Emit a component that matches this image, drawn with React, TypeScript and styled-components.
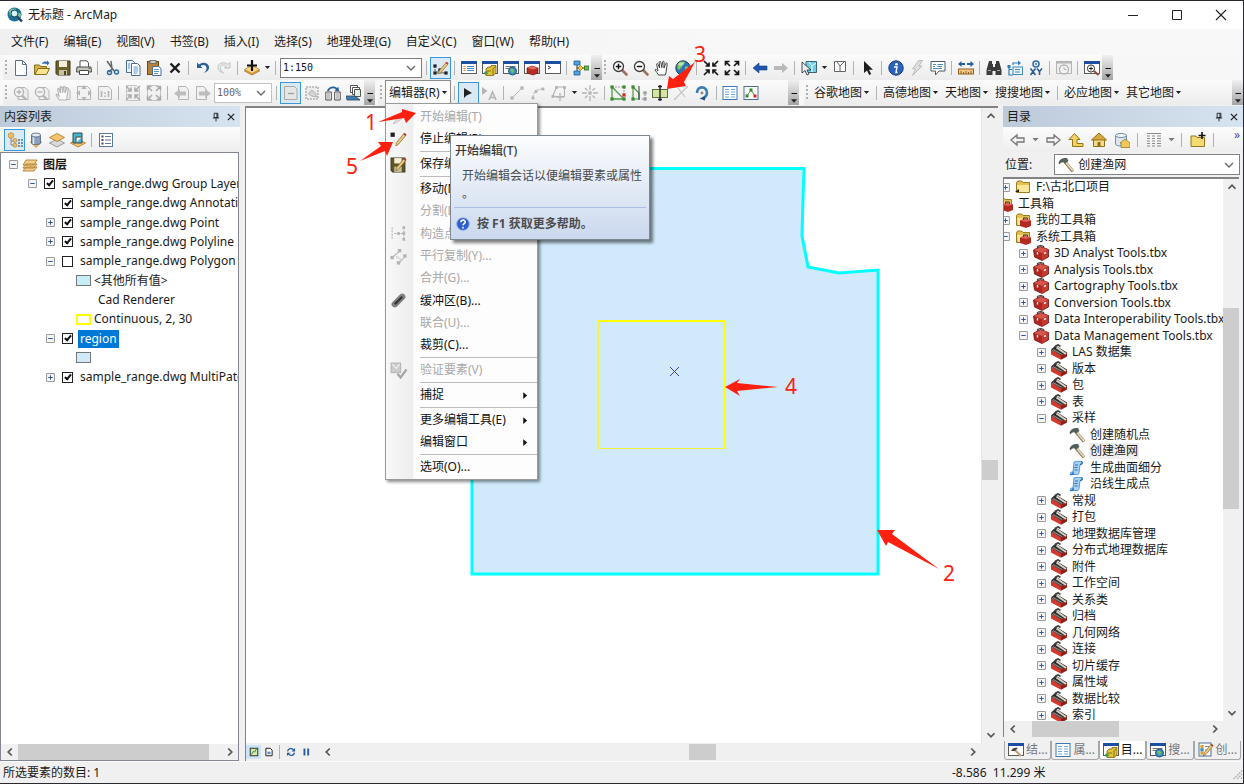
import React, { ReactNode, useState } from 'react';
import styled, { createGlobalStyle, css } from 'styled-components';

const GlobalStyle = createGlobalStyle`
  *, *::before, *::after { box-sizing: border-box; }
  html, body { margin: 0; padding: 0; }
  body, button, input, select {
    font-family: 'Noto Sans', 'Noto Sans CJK SC', sans-serif;
    font-size: 12px;
    line-height: 16px;
    color: #1a1a1a;
  }
  button { margin: 0; padding: 0; border: 0; background: none; }
  ul, h2 { margin: 0; padding: 0; list-style: none; font: inherit; }
`;

/* ---------- Icons ---------- */

const G = '#b4b4b4';
const magnifier = (c: string, handle: string, sign: ReactNode) => (
  <>
    <path d="M10 10 L14.5 14.5" stroke={handle} strokeWidth="2.6" strokeLinecap="round" />
    <circle cx="6.5" cy="6.5" r="5" fill="#fff" stroke={c} strokeWidth="1.3" />
    {sign}
  </>
);
const pageMagnifier = (sign: ReactNode) => (
  <>
    <path d="M5 2.5h7l3 3v9H5z" fill="#eee" stroke={G} />
    <circle cx="6" cy="7" r="4.6" fill="#f4f4f4" stroke={G} strokeWidth="1.4" />
    <path d="M9 10.5l4 4" stroke={G} strokeWidth="2.4" />
    {sign}
  </>
);
const windowFrame = (
  <>
    <rect x="0.5" y="1.5" width="15" height="12" fill="#fff" stroke="#5b5b5b" />
    <path d="M0 1h16v3H0z" fill="#1d4fa0" />
  </>
);
const handPath =
  'M4.5 15c-1-2-2.5-3.5-3.5-5 .2-1 1.4-.8 2.2.4L4 11 2.6 4.3c.2-1 1.2-1 1.5 0L5.6 8 5.2 2.2c.2-1 1.4-1 1.6 0L7.8 7.600 8.600 1.900c.3-1 1.500-.8 1.500.2L9.900 8l1.900-4.600c.5-.8 1.600-.4 1.400.6L12.200 11c0 1.500-.5 2.500-1 4z';
const inArrows = (c: string, w = 1.5) => (
  <g stroke={c} strokeWidth={w} fill="none">
    <path d="M1 1l4.500 4.500M6 2.500V6H2.500M15 1l-4.500 4.500M10 2.500V6h3.500M1 15l4.500-4.500M6 13.500V10H2.500M15 15l-4.500-4.500M10 13.500V10h3.500" />
  </g>
);
const outArrows = (c: string, w = 1.5) => (
  <g stroke={c} strokeWidth={w} fill="none">
    <path d="M2 2l4 4M1.500 5.500v-4h4M14 2l-4 4M14.500 5.500v-4h-4M2 14l4-4M1.500 10.500v4h4M14 14l-4-4M14.500 10.500v4h-4" />
  </g>
);
const arrowShape = 'M1 8l6-5v3h8v4H7v3z';
const toolbox = (
  <>
    <path d="M0.500 5l7-3.500 8 3v7.500L9 15.500 1.500 12z" fill="#b3261e" stroke="#6f1511" strokeWidth=".8" />
    <path d="M1 5l6.500-3 7.500 2.500L9 8z" fill="#d9564c" />
    <path d="M9 8l6-3.200v7L9 15z" fill="#c33a31" />
    <path d="M4.500 3.500V1.500l3-1 3 1V3" fill="none" stroke="#444" strokeWidth="1.300" />
    <path d="M4.500 7v2.500M11 8.500l2-1" stroke="#eee" strokeWidth="1.400" />
  </>
);
const folder = (
  <>
    <path d="M1.500 4V13.500h13V3.500H8L6.800 2H2.500z" fill="#e4c04e" stroke="#9c7c20" />
    <path d="M2 6h12v7H3z" fill="#fbe79a" />
  </>
);
const smallBox = (
  <>
    <path d="M5 8.500l5-2 6 2v5.500l-5 2-6-2z" fill="#b22a22" />
    <path d="M5 8.500l5-2 6 2-5 1.500z" fill="#df6258" />
    <path d="M8.500 7.500V6h4v1.500" fill="none" stroke="#333" />
  </>
);
const hammer = (
  <>
    <path d="M7 5l8 9.500" stroke="#8e7b57" strokeWidth="3.200" />
    <path d="M7.500 5l7.500 9" stroke="#e6dab8" strokeWidth="1.700" />
    <path d="M.500 6c1-4 4-5.500 8.500-5L10.500 4 7 6.500C5 4.500 3 5 1.500 7.500z" fill="#53605b" />
  </>
);
const stackDiamond = (y: number, c: string, s: string) => (
  <path d={`M0.500 ${y + 4}L8 ${y}l7.500 4L8 ${y + 8}z`} fill={c} stroke={s} strokeWidth=".8" />
);
const pencil = (
  <>
    <path d="M6 11L13 2.500l2 1.500L8 12.500 5.500 14z" fill="#e9c77d" stroke="#8a6b33" strokeWidth=".7" />
    <path d="M12.500 3l2 1.600 1-1.300L13.600 1.700z" fill="#b03a30" />
  </>
);
const dots = (pts: number[][], c: string, r = 1.6) =>
  pts.map(([x, y]) => <rect key={`${x}-${y}`} x={x - r} y={y - r} width={r * 2} height={r * 2} fill={c} />);

const ICONS: Record<string, ReactNode> = {
  app: (
    <>
      <circle cx="7.500" cy="7.500" r="7" fill="#1c6f95" />
      <path d="M2 4c2-3 6-3 7-2 0 2-2 2-2 4s-3 1-4 3zM9 6c2-1 4 0 5 1 0 3-2 5-4 5z" fill="#7cc6a0" />
      <circle cx="7.500" cy="6.500" r="3.500" fill="#d5f2fb" stroke="#0d3b58" />
      <path d="M10 9.500l5 5" stroke="#1b3f5c" strokeWidth="2.400" />
    </>
  ),
  new: <path d="M2.500 .5h7l4 4v11h-11z M9.500 .5v4h4" fill="#fff" stroke="#5f6f86" />,
  open: (
    <>
      <path d="M.5 14.500V5h5l1 1.500h6V9" fill="#d7b445" stroke="#8b6c16" />
      <path d="M1 14.500L4 8.500h11.500l-3 6z" fill="#fbe48f" stroke="#8b6c16" />
      <path d="M8 4c1-2.500 3-3 5-2V.5L15.500 3 13 5.500V4C11 3 9.500 3.500 8 4z" fill="#2d6db5" />
    </>
  ),
  save: (
    <>
      <path d="M1 1h14v14H2.500L1 13.500z" fill="#6b612c" stroke="#3f3a1a" />
      <rect x="4" y="1" width="8" height="6" fill="#f3efd8" />
      <rect x="4" y="10" width="8" height="5" fill="#c6c0a3" />
      <rect x="9" y="11" width="2" height="4" fill="#4a431f" />
    </>
  ),
  print: (
    <>
      <path d="M4 7V.800h7L12.500 3v4" fill="#fff" stroke="#555" />
      <path d="M1 7h14l.5 5h-15z" fill="#c7c7bd" stroke="#4a4a4a" />
      <path d="M3.500 10.500h9v4h-9z" fill="#fff" stroke="#4a4a4a" />
      <path d="M12.500 8.500h1.500" stroke="#4a7a33" />
    </>
  ),
  cut: (
    <g fill="none">
      <path d="M3 1l7 10M7 1l1 8-3 3" stroke="#666" strokeWidth="1.500" />
      <circle cx="5.500" cy="12.500" r="2" stroke="#2d6d9f" strokeWidth="1.500" />
      <circle cx="12.500" cy="12" r="2" stroke="#2d6d9f" strokeWidth="1.500" />
    </g>
  ),
  copy: (
    <>
      <path d="M1.500 .500h6l2 2v10h-8z" fill="#eaf2fb" stroke="#4d6c8e" />
      <path d="M6.500 3.500h6l2.500 2.500v9.500H6.500z" fill="#fff" stroke="#4d6c8e" />
      <path d="M8.500 7h4M8.500 9h4.500M8.500 11h4.500M8.500 13h4M3 4h2M3 6h2M3 8h2" stroke="#5a94cf" />
    </>
  ),
  paste: (
    <>
      <rect x="1.500" y="1.500" width="11" height="13" fill="#b7813a" stroke="#6d4716" />
      <rect x="4" y=".500" width="6" height="3" fill="#ccc" stroke="#555" strokeWidth=".7" />
      <path d="M6.500 6.500h6l2.500 2v7H6.500z" fill="#fff" stroke="#4d6c8e" />
      <path d="M8 9.500h5M8 11.500h5M8 13.500h4" stroke="#5a94cf" />
    </>
  ),
  delete: <path d="M3.500 3.500l9 9M12.500 3.500l-9 9" stroke="#1c1c1c" strokeWidth="2.400" />,
  undo: <path d="M2 2.500v5.500h5.500L5.500 6C8 4 12 5 11.500 8.500 11.300 10.500 10 12 8.500 13c4-1 6-3.500 5.500-6.500C13 2.500 7.500 1.500 4 4.500z" fill="#2b6195" />,
  redo: <path d="M14 2.500v5.500H8.500L10.500 6C8 4 4 5 4.500 8.500 4.700 10.500 6 12 7.500 13 3.500 12 1.500 9.500 2 6.500 3 2.500 8.500 1.500 12 4.500z" fill="#ececec" stroke="#b9b9b9" strokeWidth=".9" />,
  addData: (
    <>
      {stackDiamond(7, '#e9a93f', '#a67120')}
      {stackDiamond(5.5, '#fbd68a', '#b98430')}
      <path d="M8 0v11M3 5.500h10" stroke="#111" strokeWidth="2.200" />
    </>
  ),
  editorToolbar: (
    <>
      <path d="M2 6v7h11M2 13l5-3 3 3" fill="none" stroke="#555" strokeDasharray="2 1" />
      {dots([[2, 6], [2, 13], [7, 10], [13, 13]], '#222')}
      {pencil}
    </>
  ),
  toc: (
    <>
      {windowFrame}
      <path d="M2.500 6.500h2M2.500 8.500h2M2.500 10.500h2" stroke="#d5822b" strokeWidth="1.200" />
      <path d="M6 6.500h7M6 8.500h7M6 10.500h7" stroke="#3f87c8" strokeWidth="1.200" />
    </>
  ),
  catalog: (
    <>
      {windowFrame}
      <path d="M4 9l2-2h3V5.500h5V13l-3 2.500H4z" fill="#e2c23a" stroke="#7b6512" strokeWidth=".8" />
      <path d="M11 8.500v7M11 8.500l3-2M5 11h4" stroke="#8c7110" />
      <path d="M2 12l3-1 1 3-3 1z" fill="#4a9a4a" />
    </>
  ),
  search: (
    <>
      {windowFrame}
      <path d="M2.500 6.500h10M2.500 8.500h4" stroke="#777" />
      <circle cx="9.500" cy="11" r="4" fill="#3c8fc9" stroke="#1d5680" />
      <path d="M7 10c1-2 3-1 4 0s-1 3-2 3z" fill="#74bf62" />
    </>
  ),
  toolboxWindow: (
    <>
      {windowFrame}
      <path d="M3 8l5-2 6 2v5l-5 2-6-2z" fill="#b52d24" stroke="#6f1511" strokeWidth=".7" />
      <path d="M3 8l5-2 6 2-5 1.500z" fill="#e06a60" />
    </>
  ),
  python: (
    <>
      {windowFrame}
      <path d="M3 6l2.500 1.500L3 9" fill="none" stroke="#222" />
    </>
  ),
  model: (
    <>
      <path d="M4 3v10M4 8h9" stroke="#333" fill="none" />
      <path d="M1 1h6v4H1zM1 11h6v4H1z" fill="#4ba3df" stroke="#1d5d92" strokeWidth=".8" />
      <path d="M7.500 5.500L10 8l-2.500 2.500L5 8z" fill="#f3c843" stroke="#8c6d16" strokeWidth=".8" />
      <rect x="11.500" y="6" width="4.500" height="4" fill="#6ab85a" stroke="#2d6d23" strokeWidth=".8" />
    </>
  ),
  zoomIn: magnifier('#3c3c3c', '#a0705c', <path d="M6.500 3.800v5.400M3.800 6.500h5.400" stroke="#111" strokeWidth="1.500" />),
  zoomOut: magnifier('#3c3c3c', '#a0705c', <path d="M3.800 6.500h5.400" stroke="#111" strokeWidth="1.500" />),
  pan: <path d={handPath} fill="#fff" stroke="#333" strokeWidth=".9" />,
  globe: (
    <>
      <circle cx="8" cy="8" r="7.200" fill="#2a77b8" stroke="#174466" />
      <path d="M3 4c2-3 6-3 7-2 0 2-3 2-3 4s-2 2-3 4C2 9 2 6 3 4zM10 7c2-1 4 0 4 1 0 3-2 5-4 5z" fill="#8fc65f" />
      <ellipse cx="6" cy="4" rx="3" ry="1.800" fill="#fff" opacity=".45" />
    </>
  ),
  fixedIn: inArrows('#161616', 1.7),
  fixedOut: outArrows('#161616', 1.7),
  back: <path d={arrowShape} fill="#1f57b0" stroke="#16407f" strokeWidth=".6" />,
  forward: <path d={arrowShape} transform="matrix(-1 0 0 1 16 0)" fill="#b9b9b9" />,
  select: (
    <>
      <path d="M5 1.500h10.500v11H5z" fill="#6cd0e6" stroke="#41626b" />
      <path d="M8 2l3 4 4-3M11 6v6" stroke="#fff" fill="none" />
      <path d="M1 2v11l3-2.500L6 15l2-1-2-4h4z" fill="#e8eef2" stroke="#222" strokeWidth=".8" />
    </>
  ),
  clear: <path d="M2.500 1.500h11v10h-11zM5 2l3 4 4-4M8 6v5" fill="#fff" stroke="#666" />,
  pointer: <path d="M4 1v12l3-2.500L9.200 15l2-1-2.200-4.200h4z" fill="#1e1e1e" />,
  info: (
    <>
      <circle cx="8" cy="8" r="7.200" fill="#2b62bb" stroke="#173a80" />
      <circle cx="8.500" cy="4.200" r="1.300" fill="#fff" />
      <path d="M6 7h3l-1 5.500h1.500" stroke="#fff" strokeWidth="1.400" fill="none" />
    </>
  ),
  lightning: <path d="M9.500 .5h4L10 6h3L3.500 15.500 6.500 9h-3z" fill="#dedede" stroke="#b0b0b0" strokeWidth=".8" />,
  html: (
    <>
      <path d="M1 1.500h14v9.500H9L5.500 15v-4H1z" fill="#fff" stroke="#4b5a68" />
      <path d="M3 4.500h3M7.500 4.500H13M3 6.500h2M7.500 6.500H12M3 8.500h9" stroke="#4c8ac0" />
    </>
  ),
  measure: (
    <>
      <rect x=".5" y="9" width="15" height="5" fill="#f5c987" stroke="#966120" />
      <path d="M3 14v-3M5.500 14v-2M8 14v-3M10.500 14v-2M13 14v-3" stroke="#7a4d15" strokeWidth=".8" />
      <path d="M0 4l3.500-3v2H7v2H3.500v2zM16 4l-3.500-3v2H9v2h3.500v2z" fill="#25609f" />
    </>
  ),
  find: (
    <>
      <path d="M3 1h3v3h1v3h2V4h1V1h3l2.500 9v5H9.500v-4h-3v4H.5v-5z" fill="#3b3b3b" />
      <path d="M2 10.500h3M11 10.500h3" stroke="#aaa" />
    </>
  ),
  route: (
    <>
      <path d="M2 6v9h4M2 9.500h3M6 5V3h7" stroke="#2c7fb5" fill="none" strokeWidth="1.200" />
      <path d="M11 .5l3 2.500-3 2.500z" fill="#2c7fb5" />
      <rect x="6" y="7" width="9.500" height="7.500" fill="#eaf4fb" stroke="#3d8abb" />
      <path d="M8 9.500h5M8 12h5" stroke="#3d8abb" />
      <rect x=".5" y="5" width="3" height="3" fill="#2c7fb5" />
    </>
  ),
  xy: (
    <>
      <circle cx="8" cy="4" r="3" fill="none" stroke="#2a6aa5" strokeWidth="1.500" />
      <circle cx="8" cy="4" r="1" fill="#2a6aa5" />
      <path d="M2.500 8.500l5 6.500M7.500 8.500l-5 6.500M9 8.500l2.500 3 2.500-3M11.500 11.500V15" stroke="#2a5f95" strokeWidth="1.600" fill="none" />
    </>
  ),
  time: (
    <>
      <path d="M.5 1.500h15v12H.5z" fill="#eee" stroke={G} />
      <path d="M0 1h16v2.500H0z" fill={G} />
      <circle cx="8" cy="9.500" r="4.500" fill="#f3f3f3" stroke={G} strokeWidth="1.300" />
      <path d="M8 7v2.500h2.500" stroke={G} fill="none" />
    </>
  ),
  viewer: (
    <>
      {windowFrame}
      <circle cx="7" cy="8.500" r="3.600" fill="#fff" stroke="#333" />
      <path d="M7 6.500v4M5 8.500h4" stroke="#222" />
      <path d="M10 11l4.500 4" stroke="#8e4a35" strokeWidth="2" />
    </>
  ),
  gZoomIn: pageMagnifier(<path d="M6 4.500v5M3.500 7h5" stroke={G} strokeWidth="1.400" />),
  gZoomOut: pageMagnifier(<path d="M3.500 7h5" stroke={G} strokeWidth="1.400" />),
  gPan: (
    <>
      <path d="M5 2.500h7l3 3v9H5z" fill="#eee" stroke={G} />
      <path d={handPath} fill="#f8f8f8" stroke={G} strokeWidth="1.100" />
    </>
  ),
  gFull: (
    <>
      <path d="M1.500 1.500h10l3 3v10h-13z" fill="#f1f1f1" stroke={G} />
      <path d="M8 0l2.500 4h-5zM8 16l2.500-4h-5zM0 8l4-2.500v5zM16 8l-4-2.500v5z" fill={G} />
    </>
  ),
  gOneToOne: (
    <>
      <path d="M1.500 1.500h10l3 3v10h-13z" fill="#f1f1f1" stroke={G} />
      <path d="M4.500 6v6M11.500 6v6M8 7.500V9M8 10.500V12" stroke={G} strokeWidth="1.600" />
    </>
  ),
  gIn: (
    <>
      <path d="M1.500 .5h10l3 3v12h-13z" fill="#f1f1f1" stroke="#c4c4c4" />
      {inArrows('#aaa')}
    </>
  ),
  gOut: (
    <>
      <path d="M1.500 .5h10l3 3v12h-13z" fill="#f1f1f1" stroke="#c4c4c4" />
      {outArrows('#aaa')}
    </>
  ),
  gBack: (
    <>
      <path d="M4.500 1.500h7l3 3v10h-10z" fill="#f1f1f1" stroke={G} />
      <path d="M0 8.500l6-4.500v2.500h6v4H6V13z" fill="#bdbdbd" />
    </>
  ),
  gForward: (
    <>
      <path d="M1.500 1.500h7l3 3v10h-10z" fill="#f1f1f1" stroke={G} />
      <path d="M16 8.500l-6-4.500v2.500H4v4h6V13z" fill="#bdbdbd" />
    </>
  ),
  gDraft: (
    <>
      <path d="M1.500 1.500h10l2.500 2.500v10.500H1.500z" fill="#e6e6e6" stroke="#a9a9a9" />
      <path d="M5 8.500h6" stroke="#a0a0a0" strokeWidth="1.400" />
    </>
  ),
  gFocus: (
    <>
      <path d="M2 2h12v12H2z" fill="#ededed" stroke={G} strokeDasharray="2 1" strokeWidth="1.600" />
      <path d="M4.500 9l3-4 4 3 1 4-5-1z" fill="#d4d4d4" stroke={G} />
    </>
  ),
  changeLayout: (
    <>
      <path d="M.800 7h5.500v8H.800zM9.700 7h5.500v8H9.700z" fill="#fff" stroke="#4a4a4a" />
      <path d="M2 9h3M2 11h3M2 13h3M11 9h3M11 11h3M11 13h3" stroke="#888" />
      <path d="M2 6C3 1.500 9 0 12 3l1.500-1L14 6.500 9.500 5.500 11 4.200C8.500 2.500 4.500 3 4 6z" fill="#25609f" />
    </>
  ),
  dataDriven: (
    <>
      <path d="M4.500 .500h7v7h-7z" fill="#fff" stroke="#555" />
      <path d="M6.500 2.500h7v7h-7z" fill="#fff" stroke="#555" />
      <path d="M8.500 4.500h6v7h-6z" fill="#e3f0e0" stroke="#555" />
      <path d="M0 11h9l5 4H1z" fill="#3b81b8" stroke="#345" strokeWidth=".8" />
    </>
  ),
  editArrow: <path d="M4 3v10l2.500-2.500L12 8z" fill="#222" />,
  editAnno: (
    <>
      <path d="M1 2v8l5.500-4z" fill={G} />
      <path d="M8 15l3.500-8L15 15M9.500 12.500h4" stroke={G} strokeWidth="1.600" fill="none" />
    </>
  ),
  straight: (
    <>
      <path d="M3 13L13 3" stroke={G} />
      {dots([[3, 13], [13, 3]], G)}
    </>
  ),
  arc: (
    <>
      <path d="M3 13C3 7 7 4 13 4" stroke={G} fill="none" strokeDasharray="3 1" />
      {dots([[3, 13], [6, 6.5], [13, 4]], G, 1.4)}
    </>
  ),
  trace: (
    <>
      <path d="M1.500 11.500L5.500 2h8v9.500z" stroke={G} fill="none" strokeWidth="1.200" />
      {dots([[2, 11.5], [5.5, 2.5], [13.5, 2.5]], G, 1.4)}
      <path d="M9 8v8M5 12h8" stroke={G} strokeWidth="1.300" />
    </>
  ),
  burst: <path d="M8 0v5M8 11v5M0 8h5M11 8h5M3 3l2.500 2.500M13 3l-2.500 2.500M3 13l2.500-2.500M13 13l-2.500-2.500M7 7h2v2H7z" stroke={G} strokeWidth="1.300" fill="none" />,
  editVertices: (
    <>
      <path d="M2 2v12h12L2 2" stroke="#4e9a44" fill="none" strokeWidth="1.300" />
      <path d="M2 2h12v8" stroke="#999" fill="none" strokeDasharray="2 1" />
      {dots([[2, 2], [2, 14], [14, 14], [14, 2]], '#3a8a30')}
      {dots([[14, 10]], '#d22')}
    </>
  ),
  reshape: (
    <>
      <path d="M2 2v12M2 2l6 6v6H2" stroke="#4e9a44" fill="none" strokeWidth="1.200" />
      <path d="M8 1v14" stroke="#333" />
      <path d="M14 8v6h-4" stroke="#888" fill="none" strokeDasharray="1 1" />
      {dots([[2, 2], [2, 14]], '#3a8a30')}
      {dots([[14, 8], [14, 14]], '#999')}
    </>
  ),
  cutPolygon: (
    <>
      <rect x=".5" y="4.500" width="15" height="8" fill="#d5e3a3" stroke="#5d6d3c" />
      <path d="M8 0v16M6 1.500h4M6 14.500h4" stroke="#222" strokeWidth="1.400" />
    </>
  ),
  split: (
    <>
      <path d="M2 14L14 2M5 3l7 9" stroke="#c4c4c4" strokeWidth="1.200" />
      {dots([[2, 14], [14, 2]], '#ccc', 1)}
    </>
  ),
  rotate: (
    <>
      <path d="M3 8c0-8 10-7 10 0 0 3-2 4.500-4 6" fill="none" stroke="#3a7db8" strokeWidth="2.600" />
      <path d="M5.500 13.500L11 11v4.500z" fill="#1d5288" />
      <circle cx="8" cy="8" r="1.400" fill="#888" />
    </>
  ),
  attributes: (
    <>
      <rect x="1" y="1.500" width="14" height="13" fill="#fff" stroke="#3f78b5" />
      <path d="M3 4.500h4M3 7h4M3 9.500h4M3 12h4M9 4.500h4M9 7h4M9 9.500h4M9 12h4" stroke="#6fa8dd" />
    </>
  ),
  sketchProps: (
    <>
      <rect x="1" y="1.500" width="14" height="13" fill="#fff" stroke="#4c6f93" />
      <path d="M4 11l4-6 4 6" stroke="#4e9a44" fill="none" />
      {dots([[4, 11], [8, 5]], '#2f8a2a', 1.5)}
      {dots([[12, 11]], '#d22', 1.5)}
    </>
  ),
  listOrder: (
    <>
      <path d="M4 6v7h3M4 9h3" stroke="#888" fill="none" />
      <circle cx="4" cy="3.500" r="2.800" fill="#f0c164" stroke="#a87624" strokeWidth=".6" />
      <circle cx="8" cy="8.500" r="2" fill="#f0c164" stroke="#a87624" strokeWidth=".6" />
      <circle cx="8" cy="13.200" r="2" fill="#f0c164" stroke="#a87624" strokeWidth=".6" />
      <path d="M11 8h2M14 8h2M11 11h2M14 11h2M11 14h2M14 14h2" stroke="#3f78b5" strokeWidth="1.400" />
    </>
  ),
  listSource: (
    <>
      <path d="M2.500 10l5.500 5.500 5.500-5.500z" fill="#f3b94f" stroke="#a87624" strokeWidth=".6" />
      <path d="M3.500 3v8c0 2 9 2 9 0V3z" fill="#8ba0bd" stroke="#4d6079" strokeWidth=".8" />
      <path d="M5.500 4.500v7.500" stroke="#dfe7f0" strokeWidth="1.600" />
      <ellipse cx="8" cy="3" rx="4.500" ry="2" fill="#e2e9f2" stroke="#4d6079" strokeWidth=".8" />
    </>
  ),
  listVisible: (
    <>
      {stackDiamond(7, '#dadada', '#888')}
      {stackDiamond(1.5, '#f6c370', '#a87624')}
    </>
  ),
  listSelected: (
    <>
      {stackDiamond(7, '#f6c370', '#a87624')}
      <path d="M3 1h9v10H3z" fill="#43b7d2" stroke="#31474f" />
      <path d="M6 11V5h6" fill="#f5f5f5" stroke="#444" />
    </>
  ),
  options: (
    <>
      <rect x="1.500" y="1.500" width="13" height="13" fill="#fff" stroke="#5f7796" />
      <path d="M7 4.500h6M7 8h6M7 11.500h6" stroke="#5f7796" />
      {dots([[4.5, 4.5], [4.5, 8], [4.5, 11.5]], '#446', 1)}
    </>
  ),
  layers: (
    <>
      <path d="M1 14l3-4h11l-3 4zM1 11l3-4h11l-3 4zM1 8l3-5h11l-3 5z" fill="#f3cf8e" stroke="#b07d33" strokeWidth=".9" />
    </>
  ),
  backOutline: <path d="M1 8l6-5v3h7v4H7v3z" fill="#f3f3f3" stroke="#777" strokeWidth="1.300" />,
  forwardOutline: <path d="M15 8l-6-5v3H2v4h7v3z" fill="#f3f3f3" stroke="#777" strokeWidth="1.300" />,
  up: <path d="M1 7.500l5.500-6 5.500 6H9v4h6v3H4.500v-7z" fill="#f0d264" stroke="#917417" />,
  home: (
    <>
      <path d="M2.500 7.500h11v7h-11z" fill="#f6dc86" stroke="#8e6e1d" />
      <path d="M.5 8L8 1l7.500 7z" fill="#d9a83a" stroke="#8e6e1d" />
      <path d="M6.500 10h3v4.500h-3z" fill="#8e6e1d" />
    </>
  ),
  database: (
    <>
      <path d="M1.500 3.500v9c2 2 9 2 11 0v-9z" fill="#dbe6f2" stroke="#6f8cab" />
      <ellipse cx="7" cy="3.500" rx="5.500" ry="2" fill="#f3f7fb" stroke="#6f8cab" />
      <path d="M6 11l5-4 5 4v4.500H7V11z" fill="#f1c85a" stroke="#8e6e1d" strokeWidth=".7" />
    </>
  ),
  gridView: <path d="M1 1.500h14M1 4h3M6 4h3M11 4h4M1 6.500h3M6 6.500h3M11 6.500h4M1 9h3M6 9h3M11 9h4M1 11.500h3M6 11.500h3M11 11.500h4M1 14h3M6 14h3M11 14h4" stroke="#8a8a8a" strokeWidth="1.200" />,
  connect: (
    <>
      <path d="M1 14.500V4h5l1 1.500h7.500v9z" fill="#f3da72" stroke="#94771b" />
      <path d="M12 0v7M8.500 3.500h7" stroke="#111" strokeWidth="1.600" />
    </>
  ),
  hammer,
  folder: (
    <>
      {folder}
      <path d="M0 13l4-3v3z" fill="#222" />
    </>
  ),
  boxes: (
    <>
      {folder}
      {smallBox}
    </>
  ),
  toolbox,
  toolset: (
    <>
      <path d="M0 5.500L10 11v4.800L0 10.500z" fill="#d23a30" />
      <path d="M0 5.500L4.500 1.500 16 8.500 10 11.500z" fill="#2f2f2f" />
      <path d="M10 11.200l6-3v4.300l-6 3.300z" fill="#8a211a" />
      <path d="M5.500 3.500L15 10" stroke="#d9d4c6" strokeWidth="2" />
      <path d="M2 5.500l9 5" stroke="#8d8a82" strokeWidth="1.100" />
      <path d="M4 2.500L7 .800 9.500 2.500" stroke="#444" strokeWidth="1.600" fill="none" />
    </>
  ),
  script: (
    <>
      <path d="M5 2c3-1.500 6 0 8-.5 1 2-1 3-2 3l-1 8c0 2-2 2.500-3 2H1.500C1 12 3 11.500 4 12z" fill="#a9d2f5" stroke="#3f8fd4" strokeWidth=".9" />
      <path d="M6 5h3M5.500 7.500h3M5.500 10h3" stroke="#2570b5" />
      <path d="M11 4.500c2.500 0 3-2 1.500-3M1.500 14.500c2 .5 3-1 2.500-2.500" stroke="#1f6cb8" strokeWidth="1.300" />
    </>
  ),
  windowHammer: (
    <>
      {windowFrame}
      <path d="M7 8l6 6" stroke="#c9a878" strokeWidth="2.400" />
      <path d="M3 9c1-3 4-4 7-3L7 9z" fill="#444" />
    </>
  ),
  createFeatures: (
    <>
      <rect x="1" y="1" width="12" height="13" fill="#fff" stroke="#4c6f93" />
      {dots([[4, 4.5], [4, 11]], '#d8a334')}
      {dots([[4, 7.8]], '#3e8fb8')}
      <path d="M7 4.500h4M7 8h3" stroke="#888" />
      {pencil}
    </>
  ),
  stopEdit: (
    <>
      {dots([[2.5, 3.5]], '#222', 2)}
      {pencil}
    </>
  ),
  startEdit: <path d="M4 12l8-7 2 2-8 6-3 1z" fill="#ddd" stroke="#bbb" strokeWidth=".7" />,
  saveEdits: (
    <>
      <path d="M1 2h13v13H2.500L1 13.500z" fill="#5e5526" stroke="#3f3a1a" />
      <rect x="4" y="2" width="7" height="5" fill="#f3efd8" />
      <rect x="4" y="10" width="7" height="5" fill="#c6c0a3" />
      {pencil}
    </>
  ),
  constructPoints: (
    <>
      <path d="M2 2v12M4 8h9M13 2v12" stroke={G} strokeDasharray="2 1" />
      {dots([[13, 2.5], [13, 8], [13, 13.5], [8, 8]], G, 1.3)}
    </>
  ),
  parallel: (
    <>
      <path d="M2 9l7-6M8 15l6-7" stroke={G} />
      <path d="M6 8l4 3" stroke={G} strokeDasharray="1 1" strokeWidth="1.500" />
      {dots([[2, 9], [9, 2.5], [8, 14], [14, 7.5]], G)}
    </>
  ),
  buffer: (
    <>
      <path d="M4.500 11.500L11.500 4.500" stroke="#808080" strokeWidth="6" strokeLinecap="round" />
      <path d="M4.500 11.500L11.500 4.500" stroke="#333" strokeWidth="2" />
    </>
  ),
  validate: (
    <>
      <rect x="1" y="1" width="9" height="9" fill="#ccc" stroke={G} />
      <path d="M2 2l4 4 3-4" stroke="#f2f2f2" fill="none" />
      <path d="M7 11l3 3.500L15.500 7" stroke="#a5a5a5" strokeWidth="2.200" fill="none" />
    </>
  ),
  help: (
    <>
      <circle cx="8" cy="8" r="7.200" fill="#2b5fd0" stroke="#9ab4e6" />
      <path d="M5.500 6c0-3.500 5.500-3 5 0-.3 1.500-2.500 1.700-2.500 3.500M8 11v2" stroke="#fff" strokeWidth="1.800" fill="none" />
    </>
  ),
  dataView: (
    <>
      <rect x="2" y="2" width="12" height="12" fill="#d7e8a9" stroke="#333" strokeWidth="1.600" />
      <path d="M4 12l3-5 2 1 3-5" stroke="#3b8a42" strokeWidth="1.600" fill="none" />
    </>
  ),
  layoutView: (
    <>
      <path d="M3 2h7l3 3v9H3z" fill="#fff" stroke="#222" strokeWidth="1.600" />
      <path d="M5.500 7.500h5v4h-5z" fill="#5c8bc0" />
    </>
  ),
  refresh: (
    <>
      <path d="M2.500 7C3 2.500 9 1 12 4.500M13.500 9C13 13.500 7 15 4 11.500" stroke="#22579b" strokeWidth="2" fill="none" />
      <path d="M14.500 1.500V7H9zM1.500 14.500V9H7z" fill="#22579b" />
    </>
  ),
  pause: <path d="M4 2.500h3v11H4zM10 2.500h3v11h-3z" fill="#2b5a9e" />,
  pin: <path d="M5 2h6v7H5zM3 9.500h10M8 10v5M9.500 2v7" stroke="#222" strokeWidth="1.500" fill="none" />,
  close: <path d="M3 3l10 10M13 3L3 13" stroke="#222" strokeWidth="2" />,
  minimize: <path d="M3 8.500h10" stroke="#222" />,
  maximize: <path d="M3.500 3.500h9v9h-9z" stroke="#222" fill="none" />,
  closeWindow: <path d="M3 3l10 10M13 3L3 13" stroke="#222" strokeWidth="1.100" />,
  chevronUp: <path d="M4 10l4-4 4 4" stroke="#555" strokeWidth="2" fill="none" />,
  chevronDown: <path d="M4 6l4 4 4-4" stroke="#555" strokeWidth="2" fill="none" />,
  chevronLeft: <path d="M10 4L6 8l4 4" stroke="#555" strokeWidth="2" fill="none" />,
  chevronRight: <path d="M6 4l4 4-4 4" stroke="#555" strokeWidth="2" fill="none" />,
  comboChevron: <path d="M4 6l4 4 4-4" stroke="#666" strokeWidth="1.300" fill="none" />,
  caret: <path d="M2 4.500h12L8 11.500z" fill="#222" />,
  caretGray: <path d="M1 4.500h14L8 12z" fill="#777" />,
  caretRight: <path d="M4 2v12l7-6z" fill="#111" />,
  overflow: <path d="M3 9h11" stroke="#111" strokeWidth="2" />,
  plusNode: (
    <>
      <rect x="1" y="1" width="14" height="14" rx="1" fill="#f6f6f6" stroke="#9a9a9a" strokeWidth="1.800" />
      <path d="M8 4v8M4 8h8" stroke="#3457a5" strokeWidth="1.800" />
    </>
  ),
  minusNode: (
    <>
      <rect x="1" y="1" width="14" height="14" rx="1" fill="#f6f6f6" stroke="#9a9a9a" strokeWidth="1.800" />
      <path d="M4 8h8" stroke="#3457a5" strokeWidth="1.800" />
    </>
  ),
  grip: <path d="M15 5L5 15M15 9l-6 6M15 13l-2 2" stroke="#b0b0b0" strokeWidth="1.500" strokeDasharray="2 1" />,
};

const Svg = styled.svg`
  display: block;
  flex: none;
`;
const Icon = ({ name, size = 16 }: { name: string; size?: number }) => (
  <Svg width={size} height={size} viewBox="0 0 16 16" fill="none" aria-hidden="true">
    {ICONS[name]}
  </Svg>
);

/* ---------- Window frame ---------- */

const Window = styled.div`
  position: relative;
  display: flex;
  flex-direction: column;
  height: 100vh;
  min-height: 600px;
  overflow: hidden;
  background: #f0f0f0;
  border: 1px solid #2b2930;
  border-left: 0;
`;
const TitleBar = styled.header`
  display: flex;
  align-items: center;
  flex: none;
  height: 28px;
  padding-left: 7px;
  gap: 5px;
  background: #fff;
`;
const Title = styled.h1`
  flex: 1;
  margin: 0;
  font-size: 12px;
  font-weight: 400;
`;
const WindowButtons = styled.div`
  display: flex;
`;
const WindowButton = styled.button`
  display: flex;
  align-items: center;
  justify-content: center;
  width: 44px;
  height: 26px;
`;
const MenuBar = styled.nav`
  display: flex;
  align-items: center;
  flex: none;
  height: 26px;
  padding-left: 4px;
  background: linear-gradient(90deg, #f0f0f0, #f8f8f8 60%);
`;
const MenuBarItem = styled.button`
  padding: 0 8px 0 7px;
  white-space: nowrap;
`;

/* ---------- Toolbars ---------- */

const ToolbarRow = styled.div`
  display: flex;
  flex: none;
  height: 25px;
  gap: 5px;
  padding-left: 3px;
  background: #f7f7f7;
`;
const Toolbar = styled.div<{ $width?: number }>`
  display: flex;
  align-items: center;
  flex: ${(p) => (p.$width ? 'none' : '1')};
  width: ${(p) => (p.$width ? `${p.$width}px` : 'auto')};
  min-width: 0;
  background: linear-gradient(#fbfbfb, #ececec);
`;
const Grip = styled.span`
  flex: none;
  width: 2px;
  height: 16px;
  margin: 0 3px 0 2px;
  background: repeating-linear-gradient(#b0b0b0 0 2px, transparent 2px 4px);
`;
const Separator = styled.span`
  flex: none;
  width: 1px;
  height: 14px;
  margin: 0 3px;
  background: #b2b2b2;
`;
const ToolButton = styled.button<{ $on?: boolean }>`
  display: flex;
  align-items: center;
  justify-content: center;
  flex: none;
  width: 21px;
  height: 22px;
  ${(p) =>
    p.$on &&
    css`
      background: #dbe9f5;
      border: 1px solid #3c96dc;
    `}
`;
const CaretButton = styled.button`
  display: flex;
  align-items: center;
  justify-content: center;
  flex: none;
  width: 10px;
  height: 20px;
`;
const Overflow = styled.button`
  display: flex;
  flex-direction: column;
  align-items: center;
  justify-content: flex-end;
  flex: none;
  align-self: stretch;
  width: 11px;
  margin-left: auto;
  background: linear-gradient(#f0f0f0, #a4a4a4);
`;
const Combo = styled.span<{ $width: number; $muted?: boolean }>`
  display: grid;
  grid-template-columns: 1fr 18px;
  align-items: center;
  flex: none;
  width: ${(p) => p.$width}px;
  height: 20px;
  margin: 0 1px;
  background: #fff;
  border: 1px solid ${(p) => (p.$muted ? '#c2c2c2' : '#7f7f7f')};
  & > select {
    grid-area: 1 / 1 / 2 / 3;
    width: 100%;
    height: 100%;
    padding: 0 2px;
    appearance: none;
    border: 0;
    background: transparent;
    font-family: 'DejaVu Sans Mono', monospace;
    font-size: 10px;
    color: ${(p) => (p.$muted ? '#666' : '#111')};
  }
  & > svg {
    grid-area: 1 / 2;
    pointer-events: none;
  }
`;
const MapMenuButton = styled.button`
  display: flex;
  align-items: center;
  flex: none;
  gap: 1px;
  padding: 0 3px;
  white-space: nowrap;
`;

/* ---------- Editor menu ---------- */

const MenuAnchor = styled.div`
  position: relative;
  flex: none;
  align-self: stretch;
  z-index: 2;
`;
const EditorButton = styled.button`
  display: flex;
  align-items: center;
  gap: 1px;
  height: 24px;
  padding: 0 2px 0 3px;
  white-space: nowrap;
  background: linear-gradient(#fafafa, #fff);
  border: 1px solid #8d8d8d;
  border-bottom: 0;
`;
const Popup = styled.div`
  position: absolute;
  top: 23px;
  left: 0;
  width: 153px;
  padding: 2px 0 1px;
  background: linear-gradient(90deg, #f8f8f8, #eee 27px, #fdfdfd 28px);
  border: 1px solid #9a9a9a;
  box-shadow: 2px 2px 3px rgba(0, 0, 0, 0.45);
`;
const PopupSection = styled.div`
  & + &::before {
    content: '';
    display: block;
    height: 1px;
    margin: 1px 0 1px 34px;
    background: #bcbcbc;
  }
`;
const PopupItem = styled.button<{ $disabled?: boolean }>`
  display: grid;
  grid-template-columns: 26px 1fr 16px;
  align-items: center;
  gap: 4px;
  width: 100%;
  height: 22px;
  padding-left: 4px;
  text-align: left;
  white-space: nowrap;
  color: ${(p) => (p.$disabled ? '#a8a8a8' : '#111')};
  &:nth-of-type(3n) {
    height: 23px;
  }
`;
const Tooltip = styled.div`
  position: absolute;
  top: 55px;
  left: 65px;
  width: 200px;
  background: linear-gradient(#fcfdfe, #cad8ee);
  border: 1px solid #7d8792;
  box-shadow: 3px 3px 3px rgba(0, 0, 0, 0.5);
  color: #4c4c4c;
`;
const TooltipTitle = styled.strong`
  display: block;
  padding: 7px 4px 8px;
  font-weight: 500;
  color: #3a3a3a;
`;
const TooltipText = styled.p`
  margin: 0 4px 0 11px;
  padding-bottom: 4px;
  line-height: 18px;
  line-break: anywhere;
`;
const TooltipFoot = styled.div`
  display: flex;
  align-items: center;
  gap: 7px;
  margin: 0 3px;
  padding: 8px 2px 7px;
  border-top: 1px solid #a9c0e2;
  font-weight: 700;
`;

/* ---------- Panels ---------- */

const Body = styled.main`
  display: grid;
  grid-template-columns: 240px minmax(0, 1fr) 240px;
  column-gap: 5px;
  flex: 1;
  min-height: 0;
  margin-top: 1px;
`;
const Panel = styled.section`
  display: flex;
  flex-direction: column;
  min-width: 0;
  min-height: 0;
`;
const PanelHeader = styled.div`
  display: flex;
  align-items: center;
  flex: none;
  gap: 5px;
  height: 21px;
  padding: 0 4px;
  background: linear-gradient(90deg, #bccad9, #d6e4f2);
  & > h2 {
    flex: 1;
  }
`;
const PanelTools = styled.div<{ $gap?: number }>`
  display: flex;
  align-items: center;
  flex: none;
  gap: ${(p) => p.$gap ?? 0}px;
  height: 25px;
  padding-left: 4px;
  background: linear-gradient(#fcfcfc, #eee);
`;
const Tree = styled.ul`
  flex: 1;
  min-height: 0;
  padding-top: 2px;
  overflow: hidden;
  background: #fff;
`;
const TocFrame = styled.div`
  display: flex;
  flex-direction: column;
  flex: 1;
  min-height: 0;
  margin-right: 1px;
  border: 1px solid #828790;
`;
const TocRow = styled.li<{ $indent: number }>`
  display: flex;
  align-items: center;
  gap: 3px;
  height: 19px;
  padding-left: ${(p) => p.$indent}px;
  white-space: nowrap;
  &:nth-child(3n) {
    height: 20px;
  }
`;
const TocLabel = styled.label<{ $selected?: boolean; $bold?: boolean }>`
  padding: 1px 2px;
  font-weight: ${(p) => (p.$bold ? 700 : 400)};
  ${(p) =>
    p.$selected &&
    css`
      background: #0078d7;
      color: #fff;
    `}
`;
const NodeSlot = styled.span`
  display: flex;
  justify-content: center;
  flex: none;
  width: 12px;
`;
const IconSlot = styled.span`
  display: flex;
  justify-content: center;
  flex: none;
  width: 16px;
`;
const CheckBox = styled.input`
  appearance: none;
  flex: none;
  width: 11px;
  height: 11px;
  margin: 0;
  background: #fff;
  border: 1px solid #222;
  &:checked::after {
    content: '';
    display: block;
    width: 4px;
    height: 7px;
    margin: 0 0 0 3px;
    border: solid #111;
    border-width: 0 2px 2px 0;
    transform: rotate(40deg);
  }
`;
const Swatch = styled.span<{ $fill: string; $line: string; $weight?: number }>`
  width: 15px;
  height: 11px;
  background: ${(p) => p.$fill};
  border: ${(p) => p.$weight ?? 1}px solid ${(p) => p.$line};
`;

const BarTrack = styled.div<{ $vertical?: boolean }>`
  display: flex;
  flex-direction: ${(p) => (p.$vertical ? 'column' : 'row')};
  flex: ${(p) => (p.$vertical ? 'none' : '1')};
  width: ${(p) => (p.$vertical ? '16px' : 'auto')};
  min-width: 0;
  height: ${(p) => (p.$vertical ? 'auto' : '16px')};
  background: #f0f0f0;
`;
const BarButton = styled.button`
  display: flex;
  align-items: center;
  justify-content: center;
  flex: none;
  width: 17px;
  height: 16px;
`;
const BarPart = styled.span<{ $grow: number; $thumb?: boolean }>`
  flex: ${(p) => p.$grow} 1 0;
  background: ${(p) => (p.$thumb ? '#cdcdcd' : 'transparent')};
`;
const ScrollBarRow = styled.div`
  display: flex;
  flex: none;
`;
const ScrollBar = ({ vertical, parts }: { vertical?: boolean; parts: [number, number, number] }) => (
  <BarTrack $vertical={vertical}>
    <BarButton aria-label={vertical ? '向上滚动' : '向左滚动'}>
      <Icon name={vertical ? 'chevronUp' : 'chevronLeft'} size={14} />
    </BarButton>
    <BarPart $grow={parts[0]} />
    <BarPart $grow={parts[1]} $thumb />
    <BarPart $grow={parts[2]} />
    <BarButton aria-label={vertical ? '向下滚动' : '向右滚动'}>
      <Icon name={vertical ? 'chevronDown' : 'chevronRight'} size={14} />
    </BarButton>
  </BarTrack>
);

/* ---------- Map ---------- */

const MapFrame = styled(Panel)`
  border-top: 2px solid #828282;
  border-left: 1px solid #828282;
`;
const MapMain = styled.div`
  display: flex;
  flex: 1;
  min-height: 0;
`;
const MapCanvas = styled.div`
  flex: 1;
  min-width: 0;
  overflow: hidden;
  background: #fff;
  border-right: 1px solid #e3e3e3;
`;
const MapFoot = styled.div`
  display: flex;
  align-items: center;
  flex: none;
  height: 18px;
  padding-right: 17px;
`;
const ViewButton = styled.button<{ $on?: boolean }>`
  display: flex;
  align-items: center;
  justify-content: center;
  flex: none;
  width: 15px;
  height: 14px;
  background: ${(p) => (p.$on ? '#cce4f7' : 'transparent')};
`;
const FootSpacer = styled.span`
  flex: none;
  width: 6px;
`;

/* ---------- Catalog ---------- */

const Location = styled.label`
  display: flex;
  align-items: center;
  flex: none;
  gap: 22px;
  height: 25px;
  padding: 0 3px 0 2px;
`;
const LocationBox = styled.span`
  display: grid;
  grid-template-columns: 20px 1fr 18px;
  align-items: center;
  flex: 1;
  height: 21px;
  padding-left: 3px;
  background: #fff;
  border: 1px solid #828282;
  & > svg {
    grid-row: 1;
  }
  & > svg:first-child {
    grid-column: 1;
  }
  & > svg:last-child {
    grid-column: 3;
    pointer-events: none;
  }
  & > select {
    grid-area: 1 / 2 / 2 / 4;
    height: 18px;
    padding: 0;
    appearance: none;
    border: 0;
    background: transparent;
  }
`;
const CatalogFrame = styled.div`
  display: flex;
  flex: 1;
  min-height: 0;
  margin-right: 4px;
  border-top: 2px solid #828282;
  border-left: 1px solid #828282;
`;
const CatalogColumn = styled.div`
  display: flex;
  flex-direction: column;
  flex: 1;
  min-width: 0;
  background: #fff;
`;
const CatalogTree = styled(Tree)`
  padding-top: 0;
`;
const CatalogBarEnd = styled.div`
  display: flex;
  flex: none;
  padding-bottom: 16px;
  background: #f0f0f0;
`;
const CatalogRow = styled.li<{ $depth: number }>`
  display: flex;
  align-items: center;
  gap: 4px;
  height: 16px;
  margin-left: ${(p) => p.$depth * 18 - 23}px;
  white-space: nowrap;
  &:nth-child(even) {
    height: 17px;
  }
`;
const CatalogLabel = styled.span<{ $marked?: boolean }>`
  padding: 0 1px;
  background: ${(p) => (p.$marked ? '#efefef' : 'transparent')};
`;
const Tabs = styled.div`
  display: grid;
  grid-template-columns: repeat(5, 1fr);
  flex: none;
  height: 24px;
  margin-right: 2px;
  padding: 4px 0 1px 1px;
`;
const Tab = styled.button<{ $active?: boolean }>`
  display: flex;
  align-items: center;
  gap: 2px;
  min-width: 0;
  padding-left: 3px;
  overflow: hidden;
  white-space: nowrap;
  border: 1px solid #a8a8a8;
  border-top: 0;
  border-radius: 0 0 3px 3px;
  background: ${(p) => (p.$active ? '#fff' : '#f0f0f0')};
  color: ${(p) => (p.$active ? '#111' : '#777')};
`;
const More = styled.span`
  align-self: flex-start;
  margin: 0 3px 0 auto;
  color: #4a4ab0;
`;

const StatusBar = styled.footer`
  display: flex;
  align-items: center;
  flex: none;
  height: 22px;
  padding: 1px 0 0 3px;
  border-top: 1px solid #fafafa;
`;
const StatusText = styled.span`
  flex: 1;
`;
const Coordinates = styled.span`
  width: 277px;
  white-space: pre;
`;
const Annotations = styled.svg`
  position: absolute;
  top: -1px;
  left: 0;
  z-index: 3;
  pointer-events: none;
  font-family: 'Noto Sans', sans-serif;
  font-size: 21px;
  fill: #ff2010;
`;

/* ---------- Data ---------- */

const MENUS = ['文件(F)', '编辑(E)', '视图(V)', '书签(B)', '插入(I)', '选择(S)', '地理处理(G)', '自定义(C)', '窗口(W)', '帮助(H)'];

const EDITOR_MENU: { label: string; icon?: string; disabled?: boolean; sub?: boolean }[][] = [
  [{ label: '开始编辑(T)', icon: 'startEdit', disabled: true }, { label: '停止编辑(P)', icon: 'stopEdit' }],
  [{ label: '保存编辑内容(S)', icon: 'saveEdits' }],
  [
    { label: '移动(M)...' },
    { label: '分割(L)...', disabled: true },
    { label: '构造点(N)...', icon: 'constructPoints', disabled: true },
    { label: '平行复制(Y)...', icon: 'parallel', disabled: true },
    { label: '合并(G)...', disabled: true },
    { label: '缓冲区(B)...', icon: 'buffer' },
    { label: '联合(U)...', disabled: true },
    { label: '裁剪(C)...' },
  ],
  [{ label: '验证要素(V)', icon: 'validate', disabled: true }],
  [{ label: '捕捉', sub: true }],
  [{ label: '更多编辑工具(E)', sub: true }, { label: '编辑窗口', sub: true }],
  [{ label: '选项(O)...' }],
];

type TocNode = { label: string; depth: number; node?: 'plusNode' | 'minusNode'; checked?: boolean; selected?: boolean };
const TOC_TOP: TocNode[] = [
  { label: 'sample_range.dwg Group Layer', depth: 1, node: 'minusNode', checked: true },
  { label: 'sample_range.dwg Annotation', depth: 2, checked: true },
  { label: 'sample_range.dwg Point', depth: 2, node: 'plusNode', checked: true },
  { label: 'sample_range.dwg Polyline', depth: 2, node: 'plusNode', checked: true },
  { label: 'sample_range.dwg Polygon', depth: 2, node: 'minusNode', checked: false },
];

type CatalogNode = [depth: number, icon: string, label: string, node?: '+' | '-'];
const CATALOG: CatalogNode[] = [
  [1, 'folder', 'F:\\古北口项目', '+'],
  [0, 'boxes', '工具箱'],
  [1, 'boxes', '我的工具箱', '+'],
  [1, 'boxes', '系统工具箱', '-'],
  [2, 'toolbox', '3D Analyst Tools.tbx', '+'],
  [2, 'toolbox', 'Analysis Tools.tbx', '+'],
  [2, 'toolbox', 'Cartography Tools.tbx', '+'],
  [2, 'toolbox', 'Conversion Tools.tbx', '+'],
  [2, 'toolbox', 'Data Interoperability Tools.tbx', '+'],
  [2, 'toolbox', 'Data Management Tools.tbx', '-'],
  [3, 'toolset', 'LAS 数据集', '+'],
  [3, 'toolset', '版本', '+'],
  [3, 'toolset', '包', '+'],
  [3, 'toolset', '表', '+'],
  [3, 'toolset', '采样', '-'],
  [4, 'hammer', '创建随机点'],
  [4, 'hammer', '创建渔网'],
  [4, 'script', '生成曲面细分'],
  [4, 'script', '沿线生成点'],
  ...['常规', '打包', '地理数据库管理', '分布式地理数据库', '附件', '工作空间', '关系类', '归档', '几何网络', '连接', '切片缓存', '属性域', '数据比较', '索引'].map(
    (label): CatalogNode => [3, 'toolset', label, '+'],
  ),
];

/* ---------- Parts ---------- */

/* '|' marks a separator, '>' a drop-down caret, a leading '*' a pressed button. */
const Tools = ({ items, caret = 'caret' }: { items: string[]; caret?: string }) => (
  <>
    {items.map((item, i) => {
      if (item === '|') return <Separator key={i} />;
      if (item === '>')
        return (
          <CaretButton key={i} aria-label="更多选项">
            <Icon name={caret} size={7} />
          </CaretButton>
        );
      const on = item.startsWith('*');
      const name = on ? item.slice(1) : item;
      return (
        <ToolButton key={i} $on={on} aria-label={name}>
          <Icon name={name} />
        </ToolButton>
      );
    })}
  </>
);

const OverflowButton = () => (
  <Overflow aria-label="工具栏选项">
    <Icon name="overflow" size={8} />
    <Icon name="caret" size={8} />
  </Overflow>
);

const HeaderActions = () => (
  <>
    <button aria-label="自动隐藏">
      <Icon name="pin" size={10} />
    </button>
    <button aria-label="关闭">
      <Icon name="close" size={10} />
    </button>
  </>
);

const TocLayer = ({ label, depth, node, checked, selected }: TocNode) => {
  const [on, setOn] = useState(!!checked);
  const id = `layer-${label.replace(/\W/g, '-')}`;
  return (
    <TocRow $indent={7 + depth * 18}>
      <NodeSlot>{node && <Icon name={node} size={9} />}</NodeSlot>
      <IconSlot>
        <CheckBox id={id} type="checkbox" checked={on} onChange={() => setOn(!on)} />
      </IconSlot>
      <TocLabel htmlFor={id} $selected={selected}>
        {label}
      </TocLabel>
    </TocRow>
  );
};

const EditorMenu = () => (
  <MenuAnchor>
    <EditorButton>
      编辑器(R)
      <Icon name="caret" size={7} />
    </EditorButton>
    <Popup>
      {EDITOR_MENU.map((section, i) => (
        <PopupSection key={i}>
          {section.map((item) => (
            <PopupItem key={item.label} $disabled={item.disabled}>
              <span>{item.icon && <Icon name={item.icon} size={17} />}</span>
              <span>{item.label}</span>
              {item.sub && <Icon name="caretRight" size={9} />}
            </PopupItem>
          ))}
        </PopupSection>
      ))}
    </Popup>
    <Tooltip role="tooltip">
      <TooltipTitle>开始编辑(T)</TooltipTitle>
      <TooltipText>开始编辑会话以便编辑要素或属性。</TooltipText>
      <TooltipFoot>
        <Icon name="help" size={14} />
        按 F1 获取更多帮助。
      </TooltipFoot>
    </Tooltip>
  </MenuAnchor>
);

export default function App() {
  return (
    <Window>
      <GlobalStyle />
      <TitleBar>
        <Icon name="app" />
        <Title>无标题 - ArcMap</Title>
        <WindowButtons>
          {['minimize', 'maximize', 'closeWindow'].map((name) => (
            <WindowButton key={name} aria-label={name}>
              <Icon name={name} />
            </WindowButton>
          ))}
        </WindowButtons>
      </TitleBar>
      <MenuBar>
        {MENUS.map((m) => (
          <MenuBarItem key={m}>{m}</MenuBarItem>
        ))}
      </MenuBar>

      <ToolbarRow>
        <Toolbar $width={594}>
          <Grip />
          <Tools items={['new', 'open', 'save', 'print', '|', 'cut', 'copy', 'paste', 'delete', '|', 'undo', 'redo', '|', 'addData', '>', '|']} />
          <Combo $width={142}>
            <select aria-label="比例尺">
              <option>1:150</option>
            </select>
            <Icon name="comboChevron" />
          </Combo>
          <Tools items={['|', '*editorToolbar', '|', 'toc', 'catalog', 'search', 'toolboxWindow', 'python', '|', 'model']} />
          <OverflowButton />
        </Toolbar>
        <Toolbar $width={509}>
          <Grip />
          <Tools
            items={['zoomIn', 'zoomOut', 'pan', 'globe', '|', 'fixedIn', 'fixedOut', '|', 'back', 'forward', '|', 'select', '>', 'clear', '|', 'pointer', '|', 'info', 'lightning', 'html', '|', 'measure', '|', 'find', 'route', 'xy', '|', 'time', '|', 'viewer']}
          />
          <OverflowButton />
        </Toolbar>
      </ToolbarRow>

      <ToolbarRow>
        <Toolbar $width={370}>
          <Grip />
          <Tools items={['gZoomIn', 'gZoomOut', 'gPan', 'gFull', 'gOneToOne', '|', 'gIn', 'gOut', '|', 'gBack', 'gForward']} />
          <Combo $width={58} $muted>
            <select aria-label="缩放">
              <option>100%</option>
            </select>
            <Icon name="comboChevron" />
          </Combo>
          <Tools items={['|', '*gDraft', 'gFocus', 'changeLayout', 'dataDriven']} />
          <OverflowButton />
        </Toolbar>
        <Toolbar $width={421}>
          <Grip />
          <EditorMenu />
          <Tools
            items={['|', '*editArrow', 'editAnno', '|', 'straight', 'arc', 'trace', '>', 'burst', '|', 'editVertices', 'reshape', 'cutPolygon', 'split', 'rotate', '|', 'attributes', 'sketchProps']}
          />
          <OverflowButton />
        </Toolbar>
        <Toolbar>
          <Grip />
          {['谷歌地图', '|', '高德地图', '天地图', '搜搜地图', '|', '必应地图', '其它地图'].map((name, i) =>
            name === '|' ? (
              <Separator key={i} />
            ) : (
              <MapMenuButton key={name}>
                {name}
                <Icon name="caret" size={7} />
              </MapMenuButton>
            ),
          )}
          <OverflowButton />
        </Toolbar>
      </ToolbarRow>

      <Body>
        <Panel>
          <PanelHeader>
            <h2>内容列表</h2>
            <HeaderActions />
          </PanelHeader>
          <PanelTools>
            <Tools items={['*listOrder', 'listSource', 'listVisible', 'listSelected', '|', 'options']} />
          </PanelTools>
          <TocFrame>
            <Tree>
              <TocRow $indent={6}>
                <NodeSlot>
                  <Icon name="minusNode" size={9} />
                </NodeSlot>
                <Icon name="layers" />
                <TocLabel as="span" $bold>
                  图层
                </TocLabel>
              </TocRow>
              {TOC_TOP.map((n) => (
                <TocLayer key={n.label} {...n} />
              ))}
              <TocRow $indent={75}>
                <Swatch $fill="#c5eef6" $line="#777" />
                &lt;其他所有值&gt;
              </TocRow>
              <TocRow $indent={97}>Cad Renderer</TocRow>
              <TocRow $indent={75}>
                <Swatch $fill="#fff" $line="#ffff00" $weight={2} />
                Continuous, 2, 30
              </TocRow>
              <TocLayer label="region" depth={2} node="minusNode" checked selected />
              <TocRow $indent={75}>
                <Swatch $fill="#d0eafc" $line="#777" />
              </TocRow>
              <TocLayer label="sample_range.dwg MultiPatch" depth={2} node="plusNode" checked />
            </Tree>
            <ScrollBarRow>
              <ScrollBar parts={[0, 190, 12]} />
            </ScrollBarRow>
          </TocFrame>
        </Panel>

        <MapFrame>
          <MapMain>
            <MapCanvas>
              <svg width="734" height="632" role="img" aria-label="地图">
                <path
                  d="M226 60.500H558L557 91 556 128 562 159 593 165 632 162V466H226Z"
                  fill="#d0eafc"
                  stroke="#00ffff"
                  strokeWidth="3"
                />
                <rect x="352.500" y="213.500" width="127" height="127" fill="none" stroke="#f2f23a" strokeWidth="1" />
                <path d="M352 213h127v127" fill="none" stroke="#ffff00" strokeWidth="2" />
                <path d="M424 259l9 9M433 259l-9 9" stroke="#4038a8" />
              </svg>
            </MapCanvas>
            <ScrollBar vertical parts={[335, 20, 246]} />
          </MapMain>
          <MapFoot>
            <ViewButton $on aria-label="数据视图">
              <Icon name="dataView" size={10} />
            </ViewButton>
            <ViewButton aria-label="布局视图">
              <Icon name="layoutView" size={10} />
            </ViewButton>
            <Separator />
            <ViewButton aria-label="刷新">
              <Icon name="refresh" size={10} />
            </ViewButton>
            <ViewButton aria-label="暂停">
              <Icon name="pause" size={10} />
            </ViewButton>
            <FootSpacer />
            <ScrollBar parts={[352, 27, 248]} />
          </MapFoot>
        </MapFrame>

        <Panel>
          <PanelHeader>
            <h2>目录</h2>
            <HeaderActions />
          </PanelHeader>
          <PanelTools $gap={2}>
            <Tools
              caret="caretGray"
              items={['backOutline', '>', 'forwardOutline', 'up', 'home', 'database', '|', 'gridView', '>', '|', 'connect', '|']}
            />
            <More>»</More>
          </PanelTools>
          <Location>
            位置:
            <LocationBox>
              <Icon name="hammer" />
              <select>
                <option>创建渔网</option>
              </select>
              <Icon name="comboChevron" />
            </LocationBox>
          </Location>
          <CatalogFrame>
            <CatalogColumn>
              <CatalogTree>
                {CATALOG.map(([depth, icon, label, node]) => (
                  <CatalogRow key={label} $depth={depth}>
                    <NodeSlot>{node && <Icon name={node === '+' ? 'plusNode' : 'minusNode'} size={9} />}</NodeSlot>
                    <Icon name={icon} />
                    <CatalogLabel $marked={label === '创建渔网'}>{label}</CatalogLabel>
                  </CatalogRow>
                ))}
              </CatalogTree>
              <ScrollBarRow>
                <ScrollBar parts={[11, 85, 86]} />
              </ScrollBarRow>
            </CatalogColumn>
            <CatalogBarEnd>
              <ScrollBar vertical parts={[112, 200, 195]} />
            </CatalogBarEnd>
          </CatalogFrame>
          <Tabs>
            {[
              ['windowHammer', '结...'],
              ['attributes', '属...'],
              ['catalog', '目...'],
              ['search', '搜...'],
              ['createFeatures', '创...'],
            ].map(([icon, label]) => (
              <Tab key={label} $active={icon === 'catalog'}>
                <Icon name={icon} />
                {label}
              </Tab>
            ))}
          </Tabs>
        </Panel>
      </Body>

      <StatusBar>
        <StatusText>所选要素的数目: 1</StatusText>
        <Coordinates>{'-8.586  11.299 米'}</Coordinates>
        <Icon name="grip" size={14} />
      </StatusBar>

      <Annotations width="1000" height="600" aria-hidden="true">
        <path d="M378 122L402 112 402 109 416 113 406 123 404 118Z" />
        <path d="M360 161L381 146 378 142 393 142 387 156 385 151Z" />
        <path d="M695 62L684 82 686 86 667 89 669 76 673 79Z" />
        <path d="M778 387L737 391 740 396 725 387 740 379 737 383Z" />
        <path d="M939 569L888 542 886 546 877 530 895 530 892 534Z" />
        <text x="365" y="130">1</text>
        <text x="346" y="174">5</text>
        <text x="694" y="62">3</text>
        <text x="785" y="394">4</text>
        <text x="943" y="581">2</text>
      </Annotations>
    </Window>
  );
}
